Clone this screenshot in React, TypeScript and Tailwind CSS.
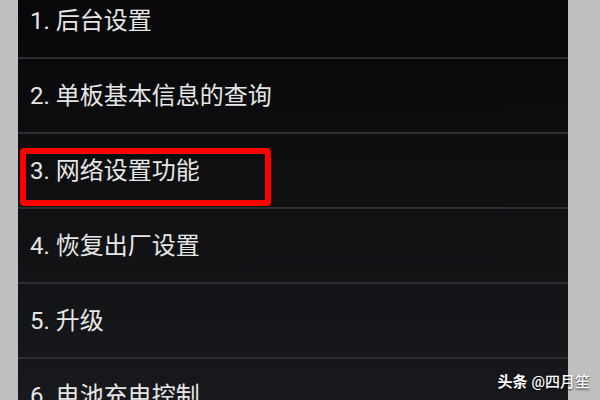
const items = [
  "1. 后台设置",
  "2. 单板基本信息的查询",
  "3. 网络设置功能",
  "4. 恢复出厂设置",
  "5. 升级",
  "6. 电池充电控制",
];

export default function App() {
  return (
    <div
      className="relative w-[600px] h-[400px] overflow-hidden bg-[#bfbfbf]"
      style={{ fontFamily: "Roboto, 'Noto Sans CJK SC', sans-serif" }}
    >
      <div className="flex flex-col ml-[18px] w-[550px] h-full overflow-hidden bg-linear-to-b from-[#08080a] to-[#18191c]">
        <div className="-mt-[16px]">
          {items.map((label) => (
            <div
              key={label}
              className="h-[75px] flex items-center pl-3 border-b-2 border-[#2c2d31] text-[24px] text-[#e6e6e6] whitespace-nowrap"
            >
              {label}
            </div>
          ))}
        </div>
      </div>

      {/* red highlight around item 3 */}
      <div className="absolute left-[20px] top-[148px] w-[251px] h-[58px] border-[6px] border-[#ff0000] rounded-[4px]" />

      {/* watermark */}
      <div className="absolute right-[10px] bottom-[10px] flex items-center gap-[4px] text-[15px] leading-none text-white [text-shadow:0_1px_2px_rgba(0,0,0,0.8)]">
        <span className="font-bold">头条</span>
        <span className="font-medium">@四月笙</span>
      </div>
    </div>
  );
}
